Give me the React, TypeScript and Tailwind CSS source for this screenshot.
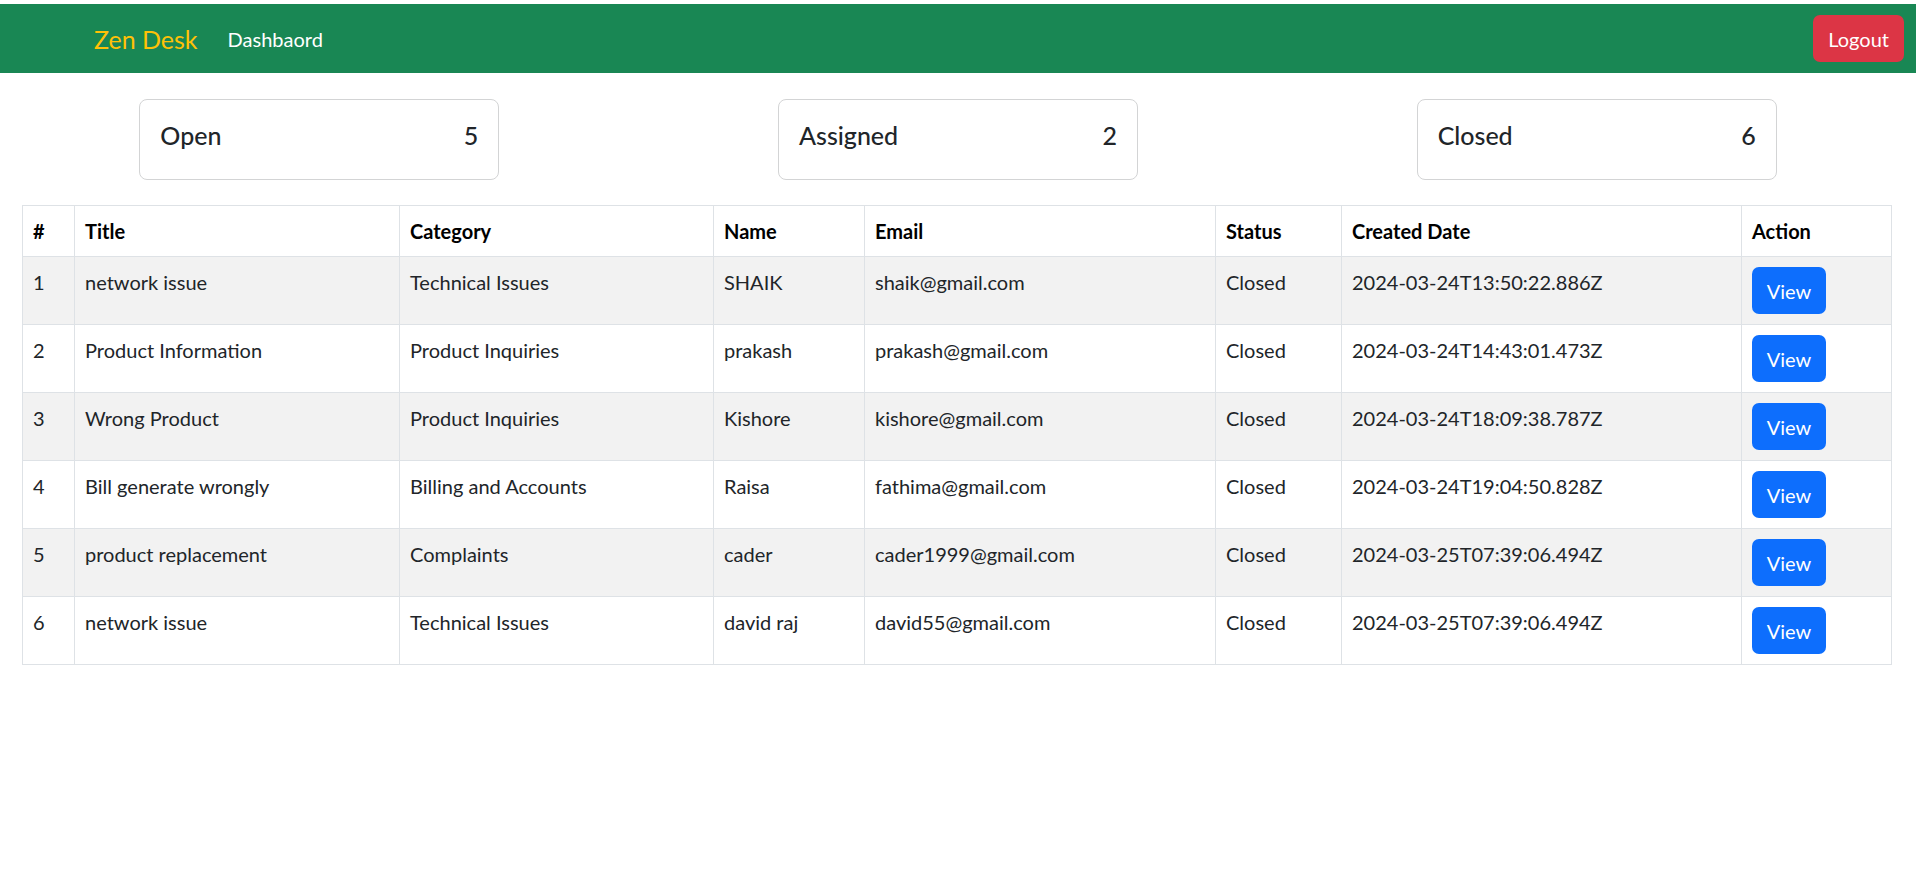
import React from 'react';

interface Ticket {
  title: string;
  category: string;
  name: string;
  email: string;
  status: string;
  created: string;
}

const tickets: Ticket[] = [
  { title: 'network issue', category: 'Technical Issues', name: 'SHAIK', email: 'shaik@gmail.com', status: 'Closed', created: '2024-03-24T13:50:22.886Z' },
  { title: 'Product Information', category: 'Product Inquiries', name: 'prakash', email: 'prakash@gmail.com', status: 'Closed', created: '2024-03-24T14:43:01.473Z' },
  { title: 'Wrong Product', category: 'Product Inquiries', name: 'Kishore', email: 'kishore@gmail.com', status: 'Closed', created: '2024-03-24T18:09:38.787Z' },
  { title: 'Bill generate wrongly', category: 'Billing and Accounts', name: 'Raisa', email: 'fathima@gmail.com', status: 'Closed', created: '2024-03-24T19:04:50.828Z' },
  { title: 'product replacement', category: 'Complaints', name: 'cader', email: 'cader1999@gmail.com', status: 'Closed', created: '2024-03-25T07:39:06.494Z' },
  { title: 'network issue', category: 'Technical Issues', name: 'david raj', email: 'david55@gmail.com', status: 'Closed', created: '2024-03-25T07:39:06.494Z' }
];

const counts = [
  { label: 'Open', value: 5 },
  { label: 'Assigned', value: 2 },
  { label: 'Closed', value: 6 }
];

function StatCard({ label, value }: { label: string; value: number }) {
  return (
    <div className="flex justify-center">
      <div className="w-[360px] h-[81px] border border-[#d3d4d5] rounded-[8px] px-5 pt-5">
        <div className="flex justify-between text-[25px] leading-[30px] font-medium text-[#212529]">
          <span>{label}</span>
          <span>{value}</span>
        </div>
      </div>
    </div>
  );
}

export default function App() {
  return (
    <div className="min-h-screen bg-white text-[#212529] text-[20px] leading-[30px] font-['Lato',sans-serif] pt-[4px]">
      {/* Navbar */}
      <nav className="h-[69px] bg-[#198754] flex items-center justify-between pl-[94px] pr-[12px]">
        <div className="flex items-center">
          <span className="text-[25px] text-[#ffc107] mr-[30px]">Zen Desk</span>
          <span className="text-white">Dashbaord</span>
        </div>
        <button className="h-[47px] px-[15px] bg-[#dc3545] text-white rounded-[7px]">
          Logout
        </button>
      </nav>

      {/* Counts */}
      <div className="grid grid-cols-3 mt-[26px]">
        {counts.map((c) => (
          <StatCard key={c.label} label={c.label} value={c.value} />
        ))}
      </div>

      {/* Tickets */}
      <div className="pl-[22px] pr-[24px] mt-[25px]">
        <table className="w-full table-fixed border-collapse border border-[#dee2e6]">
          <thead>
            <tr className="text-left font-bold text-black">
              <th className="w-[52px] border border-[#dee2e6] px-[10px] py-[10px] h-[51px]">#</th>
              <th className="w-[325px] border border-[#dee2e6] px-[10px] py-[10px]">Title</th>
              <th className="w-[314px] border border-[#dee2e6] px-[10px] py-[10px]">Category</th>
              <th className="w-[151px] border border-[#dee2e6] px-[10px] py-[10px]">Name</th>
              <th className="w-[351px] border border-[#dee2e6] px-[10px] py-[10px]">Email</th>
              <th className="w-[126px] border border-[#dee2e6] px-[10px] py-[10px]">Status</th>
              <th className="w-[400px] border border-[#dee2e6] px-[10px] py-[10px]">Created Date</th>
              <th className="border border-[#dee2e6] px-[10px] py-[10px]">Action</th>
            </tr>
          </thead>
          <tbody>
            {tickets.map((t, i) => (
              <tr key={i} className={i % 2 === 0 ? 'bg-[#f2f2f2]' : 'bg-white'}>
                <td className="border border-[#dee2e6] px-[10px] py-[10px] align-top">{i + 1}</td>
                <td className="border border-[#dee2e6] px-[10px] py-[10px] align-top">{t.title}</td>
                <td className="border border-[#dee2e6] px-[10px] py-[10px] align-top">{t.category}</td>
                <td className="border border-[#dee2e6] px-[10px] py-[10px] align-top">{t.name}</td>
                <td className="border border-[#dee2e6] px-[10px] py-[10px] align-top">{t.email}</td>
                <td className="border border-[#dee2e6] px-[10px] py-[10px] align-top">{t.status}</td>
                <td className="border border-[#dee2e6] px-[10px] py-[10px] align-top">{t.created}</td>
                <td className="border border-[#dee2e6] px-[10px] py-[10px] align-top">
                  <button className="h-[47px] w-[74px] bg-[#0d6efd] text-white rounded-[7px] block">
                    View
                  </button>
                </td>
              </tr>
            ))}
          </tbody>
        </table>
      </div>
    </div>
  );
}
